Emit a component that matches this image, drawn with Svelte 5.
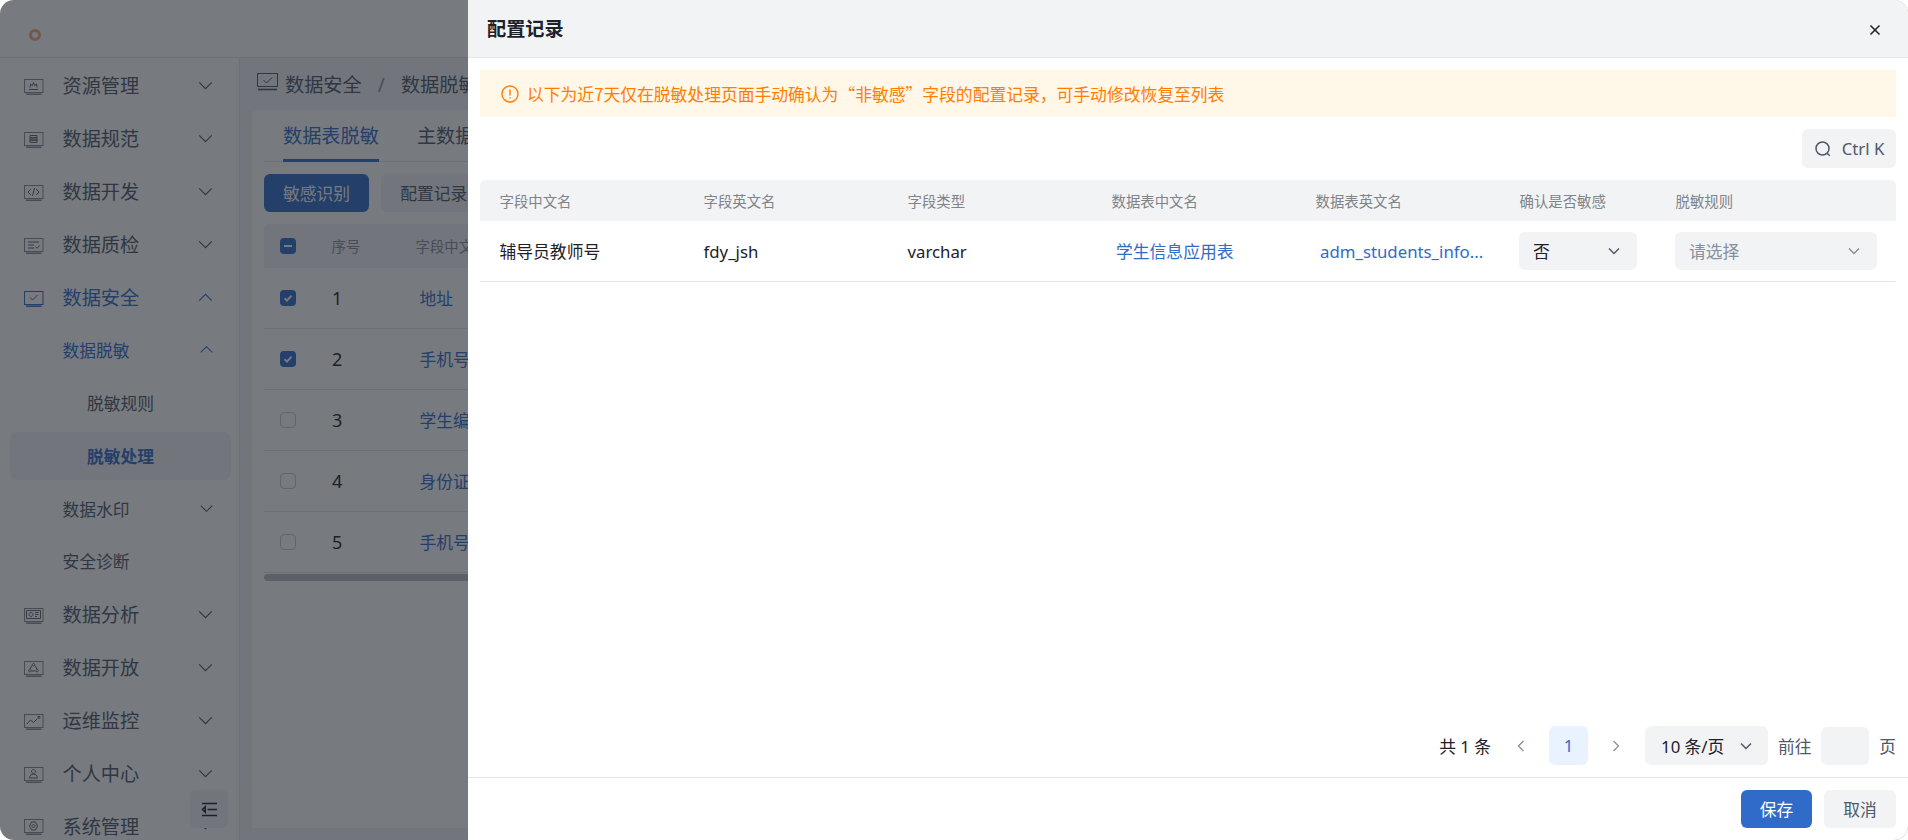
<script>
    const menu = [
        { label: '资源管理', level: 1, icon: 'M5 10.5h9M6 8.5l.6-3.5 1.8 1.6L9.5 3.5l1.1 3.1L12.4 5l.6 3.5' },
        { label: '数据规范', level: 1, icon: 'M6 3.5h7v2.3H6zM6 5.8h7v2.3H6zM6 8.1h7v2.3H6z' },
        { label: '数据开发', level: 1, icon: 'M6.8 4 4 7l2.8 3M12.2 4 15 7l-2.8 3M10.6 3 8.4 11' },
        { label: '数据质检', level: 1, icon: 'M4 4h11M4 7h6M4 10h6M11.5 8.8l1.5 1.5 2.5-2.8' },
        { label: '数据安全', level: 1, icon: 'M6 6.5l2.5 2.5L13.5 4', active: true, open: true },
        { label: '数据脱敏', level: 2, active: true, open: true },
        { label: '脱敏规则', level: 3 },
        { label: '脱敏处理', level: 3, current: true },
        { label: '数据水印', level: 2 },
        { label: '安全诊断', level: 2, noArrow: true },
        { label: '数据分析', level: 1, icon: 'M2.5 2.5h14v8h-14zM7 4.4a2 2 0 1 0 .01 0M11 4.5h3.5M11 6.5h3.5M11 8.5h2' },
        { label: '数据开放', level: 1, icon: 'M9.5 2.5a1.2 1.2 0 1 0 .01 0M5.8 8.5a1.2 1.2 0 1 0 .01 0M13.2 8.5a1.2 1.2 0 1 0 .01 0M7.8 4.5 5.8 8.5M11.2 4.5l2 4M7.5 10h4' },
        { label: '运维监控', level: 1, icon: 'M3 10l3.5-4 3 2.5L13.5 4.5M15 2.3a1 1 0 1 0 .01 0' },
        { label: '个人中心', level: 1, icon: 'M9.5 2.5a2 2 0 1 0 .01 0M5.5 11c.5-3 2-3.8 4-3.8s3.5.8 4 3.8z' },
        { label: '系统管理', level: 1, icon: 'M7.5 3h4l2 4-2 4h-4l-2-4zM9.5 5.5a1.5 1.5 0 1 0 .01 0' }
    ];

    const behindRows = [
        { no: 1, name: '地址', checked: true },
        { no: 2, name: '手机号码', checked: true },
        { no: 3, name: '学生编号', checked: false },
        { no: 4, name: '身份证号', checked: false },
        { no: 5, name: '手机号码', checked: false }
    ];

    const columns = ['字段中文名', '字段英文名', '字段类型', '数据表中文名', '数据表英文名', '确认是否敏感', '脱敏规则'];
</script>

<div class="screen">
    <header class="topbar">
        <span class="logo"></span>
    </header>

    <div class="layout">
        <aside class="sidebar">
            {#each menu as item}
                <div class="menu_item level{item.level}" class:active={item.active} class:current={item.current}>
                    {#if item.icon}
                        <svg class="menu_icon" viewBox="0 0 20 16" fill="none" stroke="currentColor" stroke-width="1">
                            <rect x="0.5" y="0.5" width="18.5" height="13" />
                            <path d="M2 15.2h15.5" stroke-width="1.5" />
                            <path d={item.icon} class="menu_glyph" />
                        </svg>
                    {/if}
                    <span class="menu_label">{item.label}</span>
                    {#if item.level < 3 && !item.noArrow}
                        <svg class="menu_arrow" viewBox="0 0 16 10" fill="none" stroke="currentColor" stroke-width="1.3">
                            <path d={item.open ? 'M1 8.5 8 1.5l7 7' : 'M1 1.5 8 8.5l7-7'} />
                        </svg>
                    {/if}
                </div>
            {/each}
            <button class="collapse" aria-label="收起">
                <svg viewBox="0 0 18 16" fill="none" stroke="currentColor" stroke-width="1.6">
                    <path d="M1 1.5h16M7 8h10M1 14.5h16M4.5 5 1.5 8l3 3z" />
                </svg>
            </button>
        </aside>

        <main class="content">
            <div class="breadcrumb">
                <svg class="crumb_icon" viewBox="0 0 21 18" fill="none" stroke="currentColor" stroke-width="1">
                    <rect x="0.5" y="0.5" width="20" height="13" />
                    <path d="M1 16.5h19" stroke-width="1.6" />
                    <path d="M6.5 7l3 3L15 4.5" />
                </svg>
                <span>数据安全</span>
                <span class="crumb_sep">/</span>
                <span>数据脱敏</span>
            </div>

            <section class="card">
                <div class="tabs">
                    <span class="tab tab_on">数据表脱敏</span>
                    <span class="tab">主数据脱敏</span>
                </div>
                <div class="actions">
                    <span class="btn_primary">敏感识别</span>
                    <span class="btn_plain">配置记录</span>
                </div>
                <div class="behind_table">
                    <div class="behind_head">
                        <span class="cb cb_on"><i class="dash"></i></span>
                        <span class="col_no">序号</span>
                        <span class="col_name">字段中文名</span>
                    </div>
                    {#each behindRows as row}
                        <div class="behind_row">
                            <span class="cb" class:cb_on={row.checked}>
                                {#if row.checked}
                                    <svg viewBox="0 0 16 16" fill="none" stroke="currentColor" stroke-width="2"><path d="M4.5 8.2 7 10.6l4.5-5" /></svg>
                                {/if}
                            </span>
                            <span class="cell_no">{row.no}</span>
                            <span class="cell_name">{row.name}</span>
                        </div>
                    {/each}
                    <div class="scrollbar"></div>
                </div>
            </section>
        </main>
    </div>

    <div class="mask"></div>

    <div class="drawer">
        <div class="drawer_head">
            <h2>配置记录</h2>
            <svg class="close" viewBox="0 0 12 12" fill="none" stroke="currentColor" stroke-width="1.5"><path d="M1.5 1.5l9 9M10.5 1.5l-9 9" /></svg>
        </div>

        <div class="drawer_body">
            <div class="notice">
                <svg viewBox="0 0 18 18" fill="none" stroke="currentColor" stroke-width="1.4">
                    <circle cx="9" cy="9" r="8" />
                    <path d="M9 4.5v6M9 12.2v1.4" />
                </svg>
                <span>以下为近7天仅在脱敏处理页面手动确认为“非敏感”字段的配置记录，可手动修改恢复至列表</span>
            </div>

            <div class="tools">
                <div class="search">
                    <svg viewBox="0 0 18 18" fill="none" stroke="currentColor" stroke-width="1.5">
                        <circle cx="8.5" cy="8.5" r="6.5" />
                        <path d="M13.2 13.2l2.6 2.6" />
                    </svg>
                    <span>Ctrl K</span>
                </div>
            </div>

            <div class="table">
                <div class="tr th">
                    {#each columns as col}
                        <span>{col}</span>
                    {/each}
                </div>
                <div class="tr td">
                    <span>辅导员教师号</span>
                    <span>fdy_jsh</span>
                    <span>varchar</span>
                    <span class="link">学生信息应用表</span>
                    <span class="link ellipsis">adm_students_info...</span>
                    <div class="select select_small">
                        <span>否</span>
                        <svg viewBox="0 0 12 8" fill="none" stroke="currentColor" stroke-width="1.5"><path d="M1 1.5 6 6.5l5-5" /></svg>
                    </div>
                    <div class="select select_wide">
                        <span class="placeholder">请选择</span>
                        <svg class="muted" viewBox="0 0 12 8" fill="none" stroke="currentColor" stroke-width="1.5"><path d="M1 1.5 6 6.5l5-5" /></svg>
                    </div>
                </div>
            </div>

            <div class="pager">
                <span class="total">共 1 条</span>
                <svg class="pg_arrow" viewBox="0 0 8 12" fill="none" stroke="currentColor" stroke-width="1.3"><path d="M6.5 1 1.5 6l5 5" /></svg>
                <span class="pg_num">1</span>
                <svg class="pg_arrow" viewBox="0 0 8 12" fill="none" stroke="currentColor" stroke-width="1.3"><path d="M1.5 1l5 5-5 5" /></svg>
                <div class="pg_size">
                    <span>10 条/页</span>
                    <svg viewBox="0 0 12 8" fill="none" stroke="currentColor" stroke-width="1.5"><path d="M1 1.5 6 6.5l5-5" /></svg>
                </div>
                <span class="pg_text">前往</span>
                <span class="pg_input"></span>
                <span class="pg_text">页</span>
            </div>
        </div>

        <div class="drawer_foot">
            <span class="btn_save">保存</span>
            <span class="btn_cancel">取消</span>
        </div>
    </div>
</div>

<style>
    :global(body) {
        background: #fff;
    }

    .screen {
        height: 840px;
        width: 1908px;

        position: relative;

        display: flex;
        flex-direction: column;

        border-radius: 14px;
        overflow: hidden;

        background-color: #fff;
        color: #1d2129;
        font-family: "Noto Sans", "Noto Sans CJK SC", sans-serif;
    }

    .topbar {
        height: 57px;
        flex: none;

        padding-left: 29px;

        display: flex;
        align-items: center;

        border-bottom: 1px solid #e5e6eb;
    }

    .logo {
        height: 12px;
        width: 12px;

        margin-top: 12px;

        box-sizing: border-box;
        border: 3px solid #f7a886;
        border-radius: 50%;
    }

    .layout {
        flex: 1;
        min-height: 0;

        display: flex;
    }

    .sidebar {
        width: 240px;
        flex: none;

        position: relative;
        padding-top: 1px;
        box-sizing: border-box;

        border-right: 1px solid #e5e6eb;

        color: #4e5969;
        overflow: hidden;
    }

    .menu_item {
        height: 52.9px;

        padding: 0 26px 0 62.5px;

        position: relative;
        display: flex;
        align-items: center;
        justify-content: space-between;

        font-size: 19.2px;
    }

    .menu_item.level2 {
        font-size: 16.8px;
    }

    .menu_item.level2 .menu_arrow {
        width: 13px;
    }

    .menu_item.level3 {
        padding-left: 87px;

        font-size: 16.8px;
    }

    .menu_item.active {
        color: #316bc9;
    }

    .menu_item.current {
        color: #316bc9;
        font-weight: 700;
    }

    .menu_item.current::before {
        content: "";

        position: absolute;
        top: 3px;
        bottom: 2px;
        left: 10px;
        right: 8px;

        border-radius: 8px;
        background-color: #f2f3f5;
    }

    .menu_label {
        position: relative;
    }

    .menu_icon {
        height: 16px;
        width: 20px;

        position: absolute;
        left: 24px;
        top: 20px;

        color: #858b95;
    }

    .menu_glyph {
        stroke: #5b6472;
    }

    .active .menu_icon {
        color: #316bc9;
    }

    .active .menu_glyph {
        stroke: #316bc9;
    }

    .menu_arrow {
        height: 9px;
        width: 15px;
    }

    .collapse {
        height: 38px;
        width: 38px;

        padding: 0;

        position: absolute;
        left: 190px;
        bottom: 12px;

        display: flex;
        align-items: center;
        justify-content: center;

        border: none;
        border-radius: 6px;

        background-color: #f2f3f5;
        color: #1d2129;
    }

    .collapse svg {
        height: 15px;
        width: 17px;
    }

    .content {
        flex: 1;
        min-width: 0;

        padding: 0 12px 12px 12px;

        display: flex;
        flex-direction: column;

        background-color: #f2f3f5;
    }

    .breadcrumb {
        height: 52px;
        flex: none;

        padding-left: 5px;

        display: flex;
        align-items: center;
        gap: 7px;

        font-size: 19.2px;
        color: #4e5969;
    }

    .crumb_icon {
        height: 18px;
        width: 21px;

        margin-top: -5px;
    }

    .crumb_sep {
        margin: 0 9px;

        color: #86909c;
    }

    .card {
        flex: 1;

        padding: 0 12px;

        border-radius: 6px 6px 0 0;

        background-color: #fff;
    }

    .tabs {
        height: 50.5px;

        padding-left: 19px;

        display: flex;
        gap: 38px;

        border-bottom: 1.5px solid #e5e6eb;
    }

    .tab {
        padding-top: 10px;

        font-size: 19.2px;
        line-height: 32px;
        color: #4e5969;
    }

    .tab_on {
        box-sizing: border-box;
        height: 52px;

        border-bottom: 3px solid #316bc9;

        color: #316bc9;
    }

    .actions {
        margin-top: 12px;

        display: flex;
        gap: 12px;
    }

    .btn_primary, .btn_plain {
        height: 38px;

        padding: 0 19px;

        display: flex;
        align-items: center;

        border-radius: 6px;

        font-size: 16.8px;
    }

    .btn_primary {
        background-color: #316bc9;
        color: #fff;
    }

    .btn_plain {
        background-color: #f2f3f5;
        color: #4e5969;
    }

    .behind_table {
        margin-top: 12px;
    }

    .behind_head, .behind_row {
        display: flex;
        align-items: center;
    }

    .behind_head {
        height: 44px;

        border-radius: 6px 6px 0 0;

        background-color: #f2f3f5;

        font-size: 14.4px;
        color: #86909c;
    }

    .behind_row {
        height: 60px;

        border-bottom: 1px solid #e5e6eb;

        font-size: 16.8px;
    }

    .behind_row:last-of-type {
        border-bottom: none;
    }

    .cb {
        height: 16px;
        width: 16px;

        margin-left: 16px;

        display: flex;
        align-items: center;
        justify-content: center;
        flex: none;

        box-sizing: border-box;
        border: 1.5px solid #c9cdd4;
        border-radius: 4px;
    }

    .cb_on {
        border: none;

        background-color: #316bc9;
        color: #fff;
    }

    .dash {
        height: 2px;
        width: 8px;

        background-color: #fff;
    }

    .col_no, .cell_no {
        width: 84px;
        flex: none;
    }

    .col_no {
        margin-left: 35.5px;
    }

    .cell_no {
        margin-left: 36px;
        margin-right: -1.5px;

        font-size: 18px;
    }

    .col_name, .cell_name {
        white-space: nowrap;
    }

    .cell_name {
        margin-left: 5px;

        color: #316bc9;
    }

    .scrollbar {
        height: 7px;
        width: 800px;

        margin-top: 1px;

        border-radius: 4px;
        background-color: #bdbec0;
    }

    .mask {
        position: absolute;
        inset: 0;

        background-color: rgba(29, 33, 41, 0.6);
    }

    .drawer {
        width: 1440px;

        position: absolute;
        top: 0;
        bottom: 0;
        right: 0;

        display: flex;
        flex-direction: column;

        background-color: #fff;
    }

    .drawer_head {
        height: 57px;
        flex: none;

        padding: 0 27px 0 19px;

        display: flex;
        align-items: center;
        justify-content: space-between;

        border-bottom: 1px solid #e5e6eb;

        background-color: #f2f3f5;
    }

    .drawer_head h2 {
        margin: 0;

        font-size: 19.2px;
        font-weight: 700;
        line-height: 1;
    }

    .close {
        height: 12px;
        width: 12px;

        margin-top: 3px;
    }

    .drawer_body {
        flex: 1;
        min-height: 0;

        padding: 12px;

        display: flex;
        flex-direction: column;
    }

    .notice {
        height: 47px;
        flex: none;

        padding-left: 21px;

        display: flex;
        align-items: center;
        gap: 8px;

        background-color: #fff7e8;

        font-family: "Noto Sans CJK SC", sans-serif;
        font-size: 16.8px;
        color: #ff7d00;
    }

    .notice svg {
        height: 18px;
        width: 18px;
    }

    .tools {
        margin-top: 12px;

        display: flex;
        justify-content: flex-end;
    }

    .search {
        height: 39px;
        width: 94px;

        display: flex;
        align-items: center;
        justify-content: center;
        gap: 10px;

        border-radius: 6px;

        background-color: #f2f3f5;

        font-size: 16.8px;
        color: #4e5969;
    }

    .search svg {
        height: 18px;
        width: 18px;
    }

    .table {
        margin-top: 12px;
    }

    .tr {
        display: grid;
        grid-template-columns: 204px 204px 204px 204px 204px 156px 1fr;
        align-items: center;
    }

    .tr > span {
        padding-left: 19.5px;
    }

    .th {
        height: 41px;

        border-radius: 6px 6px 0 0;

        background-color: #f2f3f5;

        font-size: 14.4px;
        color: #808388;
    }

    .td {
        height: 60px;

        border-bottom: 1px solid #e5e6eb;

        font-size: 16.8px;
    }

    .tr > .link {
        padding-left: 24px;

        color: #316bc9;
    }

    .ellipsis {
        white-space: nowrap;
    }

    .select {
        height: 38px;

        padding: 0 17px 0 14px;
        margin-left: 19px;

        display: flex;
        align-items: center;
        justify-content: space-between;
        box-sizing: border-box;

        border-radius: 6px;

        background-color: #f2f3f5;
    }

    .select svg {
        height: 8px;
        width: 12px;
        color: #4e5969;
    }

    .select svg.muted {
        color: #86909c;
    }

    .select_small {
        width: 118px;
    }

    .select_wide {
        width: 202px;
    }

    .placeholder {
        color: #86909c;
    }

    .pager {
        margin-top: auto;

        display: flex;
        align-items: center;
        justify-content: flex-end;

        font-size: 16.8px;
    }

    .total {
        margin-right: 26px;
    }

    .pg_arrow {
        height: 12px;
        width: 8px;

        color: #86909c;
    }

    .pg_num {
        height: 39px;
        width: 39px;

        margin: 0 24px;

        display: flex;
        align-items: center;
        justify-content: center;

        border-radius: 6px;

        background-color: #e8f3ff;
        color: #316bc9;
    }

    .pg_size {
        height: 39px;
        width: 123px;

        margin: 0 10px 0 25px;
        padding: 0 16px;

        display: flex;
        align-items: center;
        justify-content: space-between;
        box-sizing: border-box;

        border-radius: 6px;

        background-color: #f2f3f5;
    }

    .pg_size svg {
        height: 8px;
        width: 12px;

        color: #4e5969;
    }

    .pg_text {
        color: #4e5969;
    }

    .pg_input {
        height: 38px;
        width: 48px;

        margin: 0 9.8px;

        border-radius: 6px;

        background-color: #f2f3f5;
    }

    .drawer_foot {
        height: 62px;
        flex: none;

        padding: 0 12px 0 0;

        display: flex;
        align-items: center;
        justify-content: flex-end;
        gap: 12px;

        border-top: 1px solid #e5e6eb;
    }

    .btn_save, .btn_cancel {
        height: 38px;

        display: flex;
        align-items: center;
        justify-content: center;

        border-radius: 6px;

        font-size: 16.8px;
    }

    .btn_save {
        width: 71px;

        background-color: #316bc9;
        color: #fff;
    }

    .btn_cancel {
        width: 72px;

        background-color: #f2f3f5;
        color: #4e5969;
    }
</style>
